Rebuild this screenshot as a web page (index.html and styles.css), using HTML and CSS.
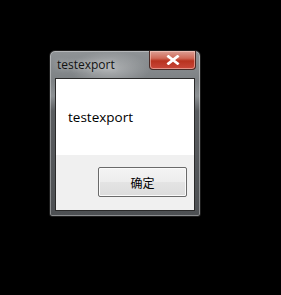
FILE: index.html
```html
<!DOCTYPE html>
<html lang="zh-CN">
<head>
    <meta charset="UTF-8">
    <title>testexport</title>
    <link rel="stylesheet" href="styles.css">
</head>
<body>
    <div class="window">
        <div class="title-bar">
            <span class="title">testexport</span>
            <div class="close-btn">
                <svg width="14" height="10" viewBox="0 0 14 10">
                    <path d="M2.5 1.5 L11.5 8.5 M11.5 1.5 L2.5 8.5" stroke="#fff" stroke-width="2.8" stroke-linecap="square"/>
                </svg>
            </div>
        </div>
        <div class="client">
            <div class="message">testexport</div>
            <div class="footer">
                <button class="ok-btn">确定</button>
            </div>
        </div>
    </div>
</body>
</html>
```

FILE: styles.css
```css
body {
    margin: 0;
    background: #000;
    width: 281px;
    height: 295px;
    overflow: hidden;
    font-family: "Open Sans", "Noto Sans CJK SC", sans-serif;
}

.window {
    margin: 50px 0 0 49px;
    width: 152px;
    height: 167px;
    box-sizing: border-box;
    border: 1px solid #1c1c1c;
    border-radius: 6px 6px 3px 3px;
    background:
        radial-gradient(ellipse 40px 18px at 60px 18px, rgba(255, 255, 255, 0.35), rgba(255, 255, 255, 0) 100%),
        linear-gradient(to bottom, #8f9396 0px, #7d8184 30px, #8c9093 45px, #5b5e61 60px, #4d5053 100%);
    box-shadow: inset 0 0 0 1px rgba(255, 255, 255, 0.35);
    padding: 0 5px 5px 5px;
    display: flex;
    flex-direction: column;
}

.title-bar {
    height: 27px;
    display: flex;
    justify-content: space-between;
    align-items: flex-start;
}

.title {
    margin-top: 5px;
    margin-left: 2px;
    font-size: 12px;
    color: #111;
    text-shadow: 0 0 6px rgba(255, 255, 255, 0.6);
}

.close-btn {
    width: 47px;
    height: 19px;
    margin-right: -1px;
    box-sizing: border-box;
    border: 1px solid #4a2a26;
    border-top: none;
    border-radius: 0 0 4px 4px;
    background: linear-gradient(to bottom, #dca095 0%, #cf6a58 40%, #b8321f 55%, #c9473a 100%);
    box-shadow: inset 0 0 0 1px rgba(255, 220, 210, 0.5);
    display: flex;
    justify-content: center;
    align-items: center;
}

.client {
    flex: 1;
    border: 1px solid #2a2a2a;
    background: #fff;
    display: flex;
    flex-direction: column;
}

.message {
    height: 76px;
    box-sizing: border-box;
    padding: 29px 0 0 12px;
    font-size: 13.5px;
    color: #000;
}

.footer {
    flex: 1;
    background: #f0f0f0;
    display: flex;
    justify-content: flex-end;
    align-items: flex-start;
    padding: 12px 7px 0 0;
}

.ok-btn {
    width: 89px;
    height: 30px;
    border: 1px solid #6a6a6a;
    border-radius: 2px;
    background: linear-gradient(to bottom, #f4f4f4 0%, #ededed 50%, #e4e4e4 51%, #dcdcdc 100%);
    box-shadow: inset 0 0 0 1px #fafafa;
    font-family: "Noto Sans CJK SC", sans-serif;
    font-size: 12px;
    color: #000;
    padding: 0;
}
```
